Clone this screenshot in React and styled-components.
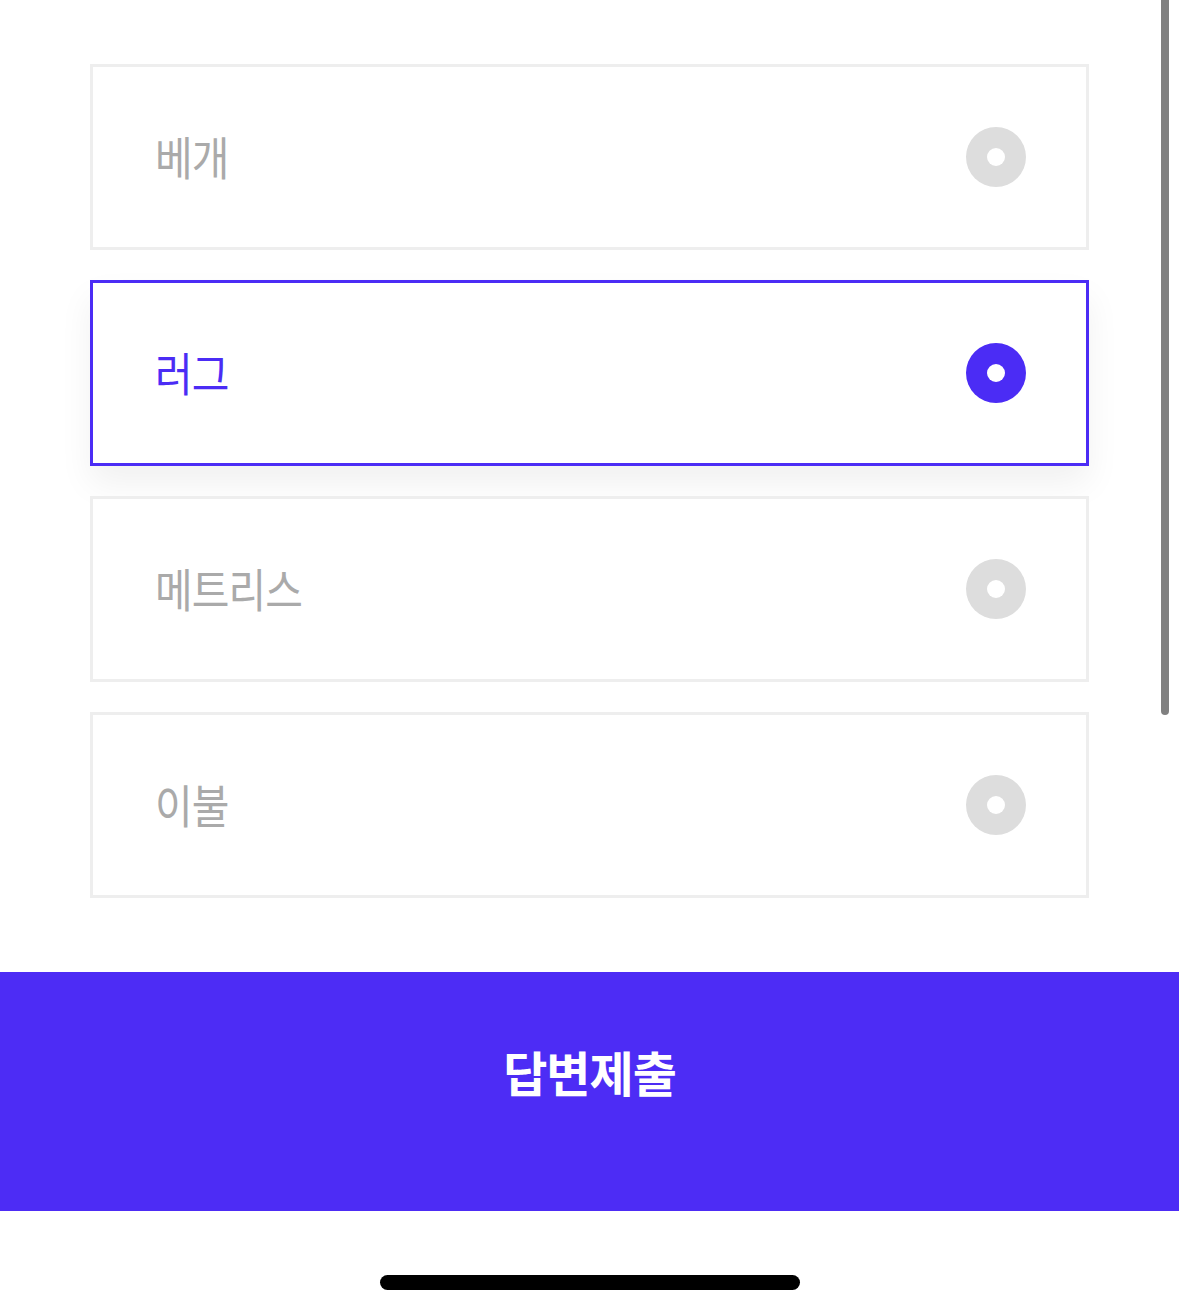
import { useState } from 'react';
import styled, { createGlobalStyle } from 'styled-components';

const GlobalStyle = createGlobalStyle`
	html, body {
		margin: 0;
		padding: 0;
		background: #ffffff;
	}
	body {
		font-family: 'Noto Sans CJK KR', 'Noto Sans', sans-serif;
	}
	* {
		box-sizing: border-box;
	}
`;

const options = ['베개', '러그', '메트리스', '이불'];

function App() {
	const [selected, setSelected] = useState(1);

	return (
		<Page>
			<GlobalStyle />
			<OptionList>
				{options.map((label, index) => (
					<Option
						key={label}
						$active={selected === index}
						onClick={() => setSelected(index)}
					>
						<Label $active={selected === index}>{label}</Label>
						<Radio $active={selected === index} />
					</Option>
				))}
			</OptionList>
			<SubmitButton>답변제출</SubmitButton>
			<HomeBar>
				<HomeIndicator />
			</HomeBar>
			<ScrollThumb />
		</Page>
	);
}

export default App;

const Page = styled.div`
	position: relative;
	width: 1179px;
	height: 1314px;
	display: flex;
	flex-direction: column;
	overflow: hidden;
`;

const OptionList = styled.div`
	display: flex;
	flex-direction: column;
	gap: 30px;
	padding: 64px 90px 0 90px;
`;

const Option = styled.div`
	height: 186px;
	display: flex;
	align-items: center;
	justify-content: space-between;
	padding: 0 60px 0 62px;
	background: #fff;
	border: 3px solid ${p => (p.$active ? '#4b2cf5' : '#eeeeee')};
	box-shadow: ${p => (p.$active ? '0 18px 32px rgba(0, 0, 0, 0.06)' : 'none')};
	cursor: pointer;
`;

const Label = styled.span`
	display: inline-block;
	font-size: 46px;
	font-weight: 400;
	line-height: 1;
	letter-spacing: -1px;
	color: ${p => (p.$active ? '#4b2cf5' : '#aaaaaa')};
	transform: scaleX(0.89);
	transform-origin: left center;
	margin-top: -5px;
`;

const Radio = styled.span`
	width: 60px;
	height: 60px;
	border-radius: 50%;
	background: ${p => (p.$active ? '#4b2cf5' : '#dddddd')};
	display: flex;
	align-items: center;
	justify-content: center;

	&::after {
		content: '';
		width: 18px;
		height: 18px;
		border-radius: 50%;
		background: #fff;
	}
`;

const SubmitButton = styled.button`
	margin-top: 74px;
	width: 100%;
	height: 239px;
	border: none;
	background: #4d2cf5;
	color: #fff;
	font-family: 'Noto Sans CJK KR', sans-serif;
	font-size: 48px;
	font-weight: 700;
	letter-spacing: -1px;
	padding: 0 0 42px;
	cursor: pointer;
`;

const HomeBar = styled.div`
	flex: 1;
	display: flex;
	justify-content: center;
	padding-top: 64px;
`;

const HomeIndicator = styled.div`
	width: 420px;
	height: 15px;
	border-radius: 8px;
	background: #000;
`;

const ScrollThumb = styled.div`
	position: absolute;
	top: 0;
	right: 10px;
	width: 8px;
	height: 715px;
	background: #808080;
	border-radius: 0 0 4px 4px;
`;
